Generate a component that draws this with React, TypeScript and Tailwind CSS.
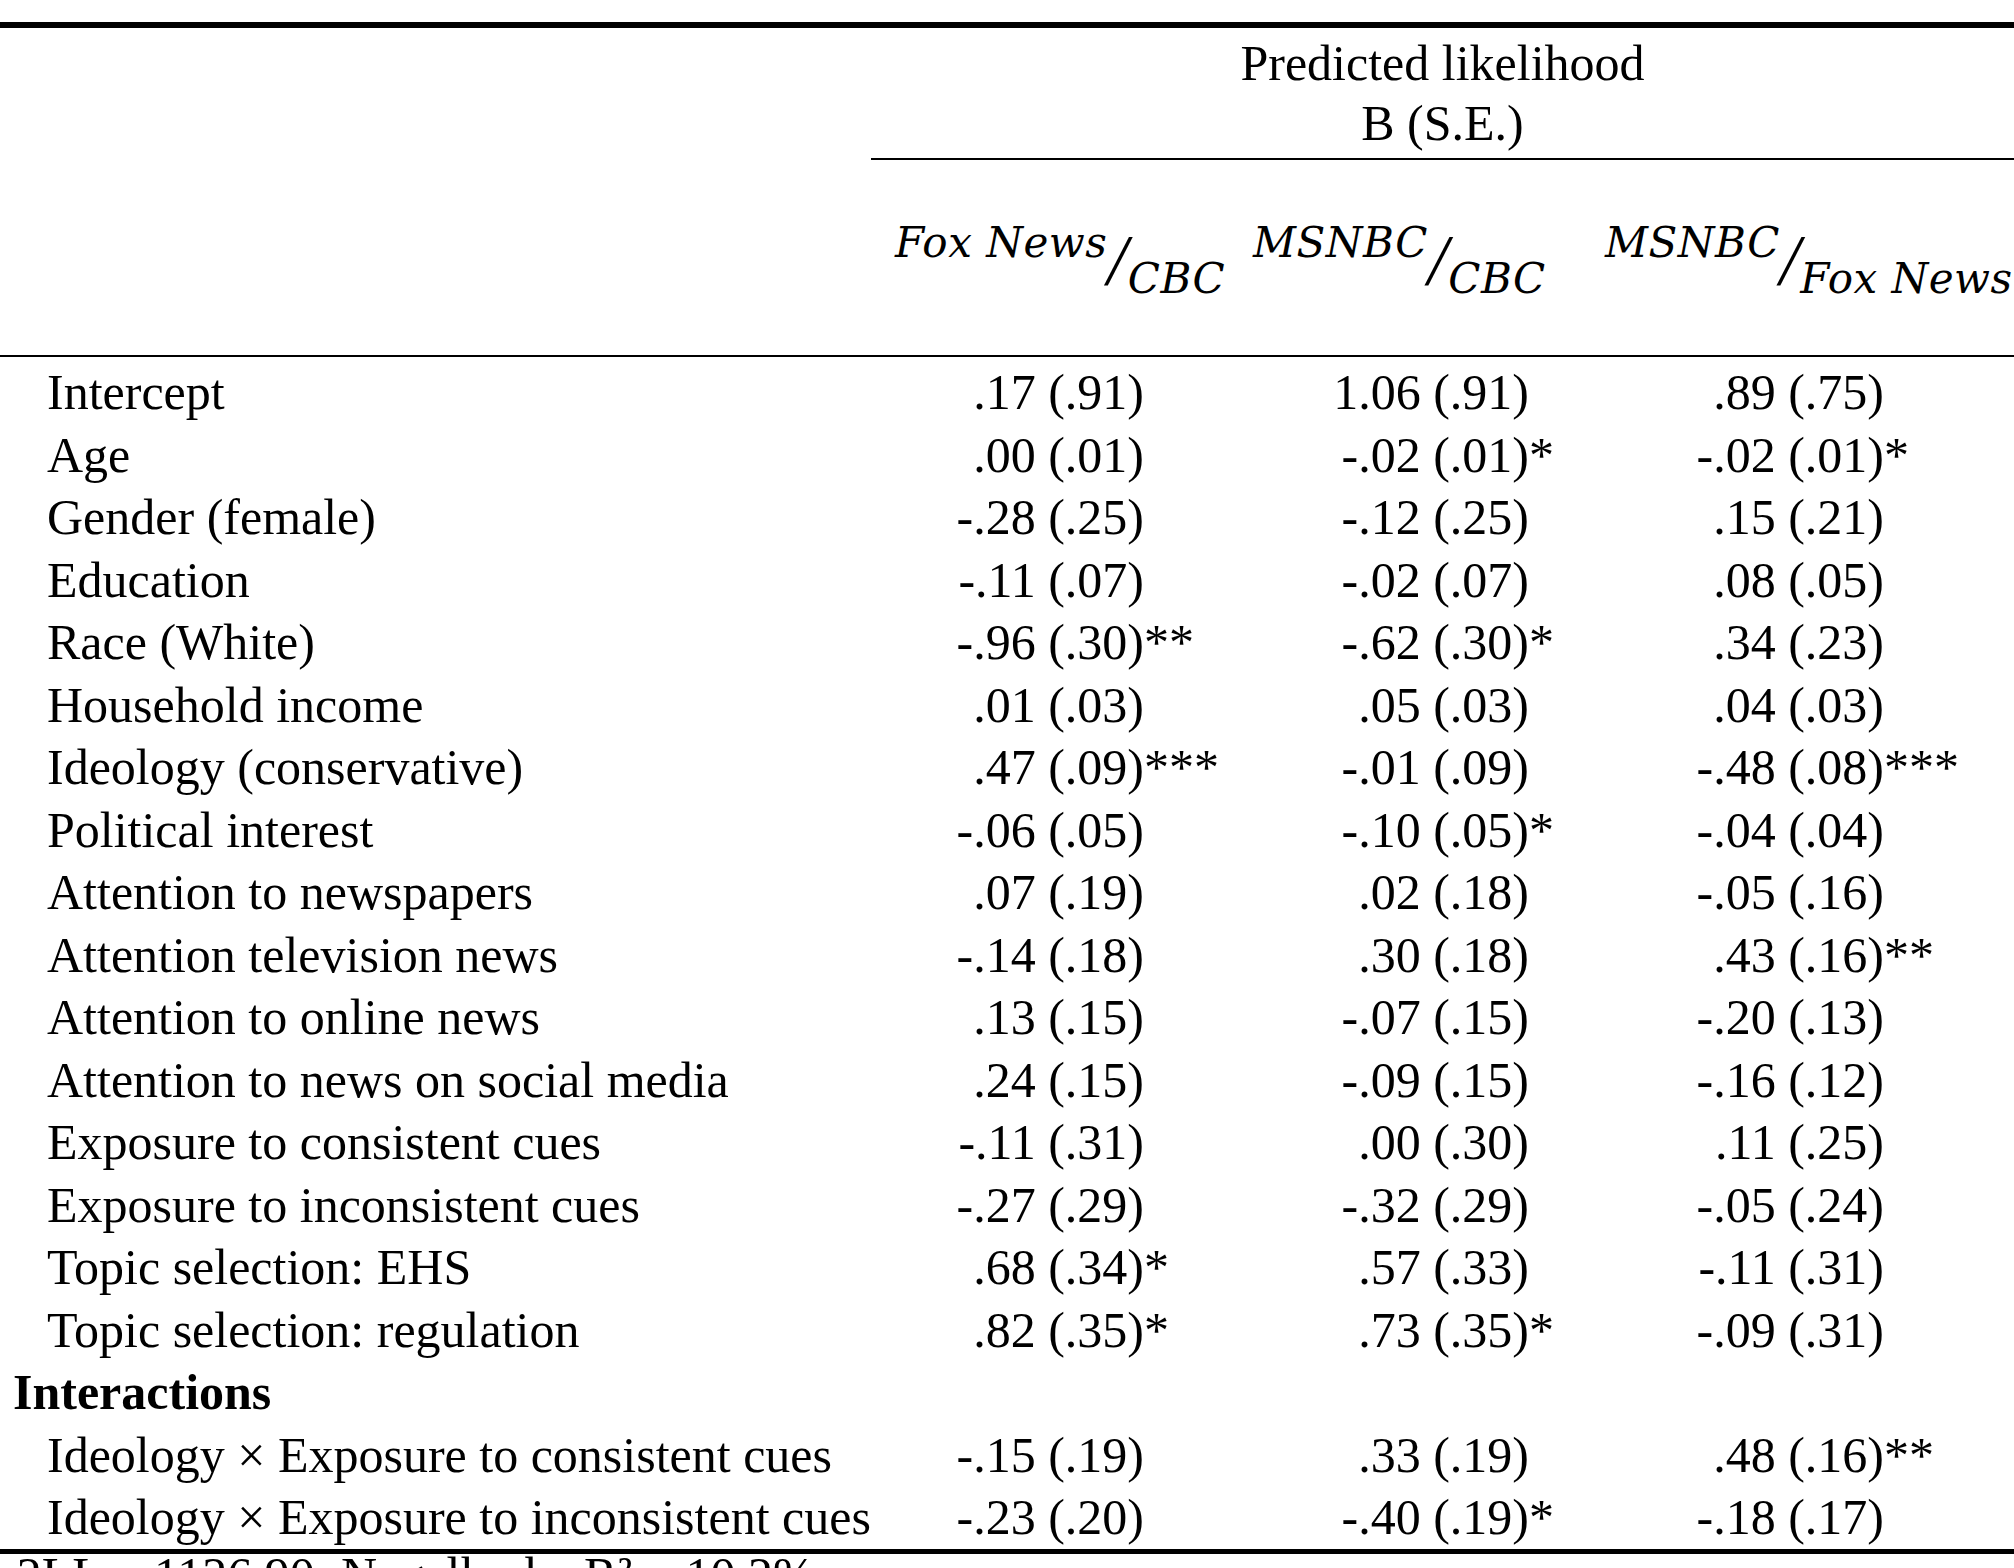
const rows: [string, string, string, string, string, string, string][] = [
  ["Intercept", ".17 (.91)", "", "1.06 (.91)", "", ".89 (.75)", ""],
  ["Age", ".00 (.01)", "", "-.02 (.01)", "*", "-.02 (.01)", "*"],
  ["Gender (female)", "-.28 (.25)", "", "-.12 (.25)", "", ".15 (.21)", ""],
  ["Education", "-.11 (.07)", "", "-.02 (.07)", "", ".08 (.05)", ""],
  ["Race (White)", "-.96 (.30)", "**", "-.62 (.30)", "*", ".34 (.23)", ""],
  ["Household income", ".01 (.03)", "", ".05 (.03)", "", ".04 (.03)", ""],
  ["Ideology (conservative)", ".47 (.09)", "***", "-.01 (.09)", "", "-.48 (.08)", "***"],
  ["Political interest", "-.06 (.05)", "", "-.10 (.05)", "*", "-.04 (.04)", ""],
  ["Attention to newspapers", ".07 (.19)", "", ".02 (.18)", "", "-.05 (.16)", ""],
  ["Attention television news", "-.14 (.18)", "", ".30 (.18)", "", ".43 (.16)", "**"],
  ["Attention to online news", ".13 (.15)", "", "-.07 (.15)", "", "-.20 (.13)", ""],
  ["Attention to news on social media", ".24 (.15)", "", "-.09 (.15)", "", "-.16 (.12)", ""],
  ["Exposure to consistent cues", "-.11 (.31)", "", ".00 (.30)", "", ".11 (.25)", ""],
  ["Exposure to inconsistent cues", "-.27 (.29)", "", "-.32 (.29)", "", "-.05 (.24)", ""],
  ["Topic selection: EHS", ".68 (.34)", "*", ".57 (.33)", "", "-.11 (.31)", ""],
  ["Topic selection: regulation", ".82 (.35)", "*", ".73 (.35)", "*", "-.09 (.31)", ""],
];

const interactions: [string, string, string, string, string, string, string][] = [
  ["Ideology × Exposure to consistent cues", "-.15 (.19)", "", ".33 (.19)", "", ".48 (.16)", "**"],
  ["Ideology × Exposure to inconsistent cues", "-.23 (.20)", "", "-.40 (.19)", "*", "-.18 (.17)", ""],
];

const grid = "grid grid-cols-[871px_369px_350px_1fr]";

function Cell({ value, stars, box }: { value: string; stars: string; box: string }) {
  return (
    <div className="flex whitespace-nowrap">
      <span className={box + " text-right"}>{value}</span>
      <span>{stars}</span>
    </div>
  );
}

function Row({ r }: { r: [string, string, string, string, string, string, string] }) {
  return (
    <div className={grid + " h-[62.5px] leading-[62.5px]"}>
      <div className="pl-[47px] whitespace-nowrap">{r[0]}</div>
      <Cell value={r[1]} stars={r[2]} box="w-[273px]" />
      <Cell value={r[3]} stars={r[4]} box="w-[289px]" />
      <Cell value={r[5]} stars={r[6]} box="w-[294px]" />
    </div>
  );
}

function Ratio({ top, bottom, pad }: { top: string; bottom: string; pad: string }) {
  return (
    <div className={pad + " pt-[63px] leading-[40px] whitespace-nowrap font-['DejaVu_Serif',serif] italic text-[42px] tracking-[0.5px]"}>
      <span>{top}</span>
      <span className="font-['Liberation_Serif',serif] text-[72px] align-[-27px]">/</span>
      <span className="align-[-36px]">{bottom}</span>
    </div>
  );
}

export default function App() {
  return (
    <div className="h-[1568px] w-[2014px] overflow-hidden bg-white text-black font-['Liberation_Serif',serif] text-[50px]">
      <div className="mt-[22px] border-t-[6px] border-black" />

      <div className="flex">
        <div className="w-[871px] shrink-0" />
        <div className="flex-1 border-b-2 border-black pt-[5px] pb-[5px] text-center leading-[60px]">
          <div>Predicted likelihood</div>
          <div>B (S.E.)</div>
        </div>
      </div>

      <div className={grid + " h-[197px] border-b-2 border-black"}>
        <div />
        <Ratio top="Fox News" bottom="CBC" pad="pl-[24px]" />
        <Ratio top="MSNBC" bottom="CBC" pad="pl-[13px]" />
        <Ratio top="MSNBC" bottom="Fox News" pad="pl-[15px]" />
      </div>

      <div className="pt-[4px]">
        {rows.map((r) => (
          <Row key={r[0]} r={r} />
        ))}
        <div className="h-[62.5px] pl-[13px] font-bold leading-[62.5px]">Interactions</div>
        {interactions.map((r) => (
          <Row key={r[0]} r={r} />
        ))}
      </div>

      <div className="border-t-[5px] border-black" />
      <div className="-mt-[4px] whitespace-nowrap leading-[50px]">-2LL = 1126.90; Nagelkerke R² = 10.2%</div>
    </div>
  );
}
